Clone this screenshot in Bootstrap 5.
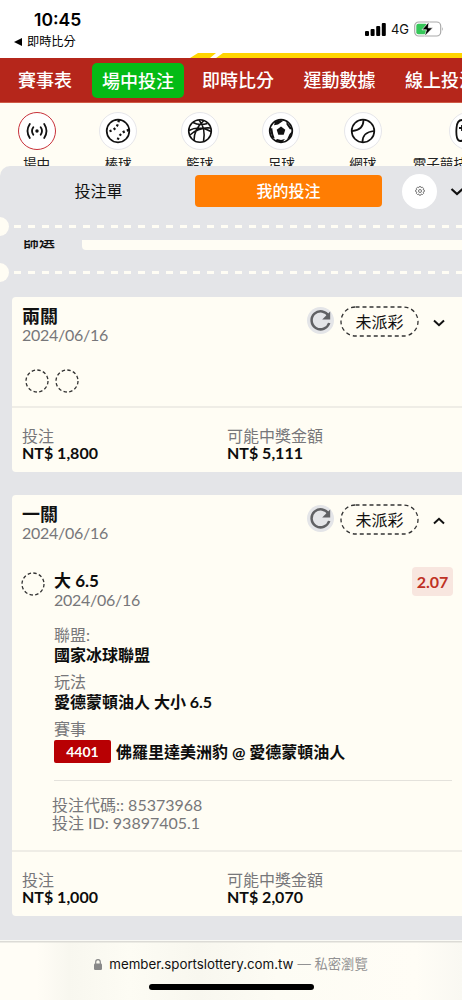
<!DOCTYPE html>
<html lang="zh-Hant">
<head>
<meta charset="utf-8">
<meta name="viewport" content="width=device-width, initial-scale=1">
<title>我的投注</title>
<link href="https://cdn.jsdelivr.net/npm/bootstrap@5.3.0/dist/css/bootstrap.min.css" rel="stylesheet">
<style>
:root{--cream:#fffdf4;--sheet:#e4e5e8;--brand:#b5261b}
body{width:462px;height:1000px;overflow:hidden;background:var(--cream);color:#111;font-family:Lato,"Noto Sans CJK TC",sans-serif;font-size:16px;line-height:18px}
svg{display:block;flex:none}
.ios{font-family:Inter,"Noto Sans CJK TC",sans-serif}
.status{height:58px;background:#fff}
.clock{font-size:17.5px;font-weight:600;line-height:20px;padding:10px 0 0 34px;height:33px;color:#000}
.back{font-size:12.2px;line-height:18px;padding-left:14px;color:#000;gap:4px}
.signal{top:20px;right:18px;gap:5px;font-size:13px}
.stripe{left:190px;top:53px}
.topnav{height:45px;background:var(--brand);border-bottom:1px solid #cf5b47;color:#fff;font-size:18px;font-weight:500;padding-left:18px;white-space:nowrap}
.topnav a{color:#fff;text-decoration:none;line-height:26px;flex:none}
.topnav .wide{width:101.5px}
.topnav .live{background:#04bb16;border-radius:5px;width:92px;height:35px;line-height:36px;text-align:center;margin:0 18px 0 20px}
.sports{height:63px;padding-top:9px;margin-left:-4.3px;width:560px}
.sport{width:81.6px;flex:none;font-size:13.6px;color:#222}
.sport.esport{width:129px}
.esport span{align-self:flex-start;margin-left:9px}
.ball{width:38px;height:38px;border:1px solid #e6e6ea;background:#fff;flex:none}
.ball.on{border-color:#c8313a}
.sport span{white-space:nowrap;line-height:18px;margin-top:5px}
.sheet{height:774px;background:var(--sheet);border-radius:10px 0 0 0;overflow:hidden}
.tabs{height:51px;padding-bottom:1px}
.tab-a{width:195px;text-align:center;padding-left:2px}
.tab-b{width:187px;height:32px;background:#ff7d03;color:#fff;border-radius:4px;line-height:31px;text-align:center;font-weight:500}
.gear{width:35px;height:35px;background:#fff;margin-left:20px;flex:none}
.perf{height:19px}
.notch{width:19px;height:19px;margin-left:-10px;background:var(--cream);flex:none}
.dashes{height:3px;width:462px;margin-left:4.8px;background:repeating-linear-gradient(90deg,var(--cream) 0 7px,transparent 7px 13.8px)}
.filter{height:10.5px;margin:3.5px 0 13px;overflow:hidden}
.filter b{width:82px;padding-left:23px;font-weight:500;margin-top:-9px;line-height:20px;flex:none}
.filter i{width:385px;flex:none;height:10.5px;background:var(--cream);border-radius:0 0 4px 4px}
.slip{margin-left:12px;width:453px;background:var(--cream);border-radius:4px}
.t18{font-size:18px;font-weight:700;height:20px;line-height:20px;color:#111}
.ln{height:18px;line-height:18px;white-space:nowrap}
.lbl{height:20px}
.val{height:27px}
.soft{color:#77777a}
.day{letter-spacing:-.28px}
.bold7{font-weight:700;color:#0d0d0d}
.head{height:50px;padding:9px 0 0 10px}
.name{width:285px}
.reload{width:27px;height:27px;background:var(--sheet);border-radius:50%;margin-top:1px}
.state{width:79px;height:31px;line-height:32px;margin-left:6px}
.chev{margin:13px 0 0 14px}
.foot{border-top:2px solid #efede6;height:65px;padding:19px 0 0 10px}
.foot>div{width:205px}
.foot .bold7{margin-top:-1px}
.odds{background:#f8e6df;color:#bf3124;font-weight:700;width:41px;height:29px;border-radius:4px;line-height:29px;text-align:center;margin-right:-1px}
.code{background:#b80003;color:#fff;width:57px;height:23px;border-radius:2px;line-height:23px;text-align:center;font-size:14px;font-weight:700}
.rule{height:17px;border-bottom:1px solid #e4e2dc}
.addr{height:60px;background:linear-gradient(90deg,#fffdf6 8%,#f8f7ef 15%,#fdfcf4 28%,#f8f7ef 43%,#fdfcf4 60%,#fffdf6 90%,#f9f8f2);border-top:1px solid #fafaf5;box-shadow:inset 0 1.5px 0 #dcdbd6;font-size:13.3px;color:#111}
.homebar{width:165px;height:6px;border-radius:3px;background:#000;margin-top:10px}
</style>
</head>
<body>
<svg width="0" height="0" class="position-absolute"><defs>
<g id="reload"><path d="M21.6 9.2A9 9 0 1 0 22.2 16" fill="none" stroke="#606164" stroke-width="2.5"/><path d="M23.2 4.5v8h-8z" fill="#606164"/></g>
<g id="pill"><rect x="1" y="1" width="77" height="29" rx="14.5" fill="none" stroke="#333" stroke-width="1.3" stroke-dasharray="4 3"/></g>
<g id="ring"><circle cx="12" cy="12" r="11" fill="none" stroke="#333" stroke-width="1.3" stroke-dasharray="3.4 2.36"/></g>
</defs></svg>

<header class="status ios position-relative">
  <div class="clock">10:45</div>
  <div class="back d-flex align-items-center"><svg width="9" height="8"><path d="M0 4 8 0v8z"/></svg><span>即時比分</span></div>
  <div class="signal position-absolute d-flex align-items-center">
    <svg width="21" height="14"><g fill="#000"><rect y="9" width="4" height="5" rx="1"/><rect x="5.6" y="7" width="4" height="7" rx="1"/><rect x="11.2" y="4" width="4" height="10" rx="1"/><rect x="16.8" y="1" width="4" height="13" rx="1"/></g></svg>
    <span>4G</span>
    <svg width="30" height="16"><rect x=".7" y="1" width="26" height="14" rx="4" fill="#fff" stroke="#aaa" stroke-width="1.2"/><rect x="2.3" y="2.7" width="11" height="10.6" rx="2" fill="#35c759"/><path d="M28 6q1.8 2 0 4z" fill="#aaa"/><path d="M15 .8 8 8.8h4.5L10.500 15.300 18.800 6.800h-4.600z" fill="#000" stroke="#fff" stroke-width=".7"/></svg>
  </div>
  <svg class="stripe position-absolute" width="272" height="5"><path d="M0 5 8 0h18l-6 5zM26 5l7-5h239v5z" fill="#ffd500"/></svg>
</header>

<nav class="topnav d-flex align-items-center">
  <a href="#">賽事表</a><a href="#" class="live">場中投注</a><a href="#" class="wide">即時比分</a><a href="#" class="wide">運動數據</a><a href="#">線上投注</a>
</nav>

<div class="overflow-hidden">
<div class="sports d-flex">
  <div class="sport d-flex flex-column align-items-center"><div class="ball on rounded-circle d-flex align-items-center justify-content-center"><svg width="22" height="18" viewBox="0 0 22 18" fill="none" stroke="#111" stroke-width="1.8" stroke-linecap="round"><circle cx="11" cy="9" r="1.7" fill="#111" stroke="none"/><path d="M7.300 5.300q-2.600 3.700 0 7.400M14.700 5.300q2.600 3.700 0 7.400M3.800 2Q-.8 9 3.800 16M18.200 2Q22.800 9 18.200 16"/></svg></div><span>場中</span></div>
  <div class="sport d-flex flex-column align-items-center"><div class="ball rounded-circle d-flex align-items-center justify-content-center"><svg width="26" height="26" viewBox="0 0 26 26" fill="none" stroke="#111" stroke-width="1.7"><circle cx="13" cy="13" r="11.3"/><path d="M13.800 2Q13 12 2 13.800M24 12Q14 14 12.200 24" stroke-width="2.300" stroke-dasharray="2.200 2.300"/></svg></div><span>棒球</span></div>
  <div class="sport d-flex flex-column align-items-center"><div class="ball rounded-circle d-flex align-items-center justify-content-center"><svg width="26" height="26" viewBox="0 0 26 26" fill="none" stroke="#111" stroke-width="1.600"><circle cx="13" cy="13" r="11.300"/><path d="M12 2Q19 10 16.500 23.800M6 4.500Q12 8 20.500 5.500M2 12.500Q12 7 24 13.500M17 2.500Q7 11 7 22.500M3 17Q12 9 23.500 10"/></svg></div><span>籃球</span></div>
  <div class="sport d-flex flex-column align-items-center"><div class="ball rounded-circle d-flex align-items-center justify-content-center"><svg width="26" height="26" viewBox="0 0 26 26"><circle cx="13" cy="13" r="11.300" fill="none" stroke="#111" stroke-width="1.700"/><path d="M13 8.600l4.300 3.100-1.600 5.100h-5.400l-1.600-5.100zM7 3.500 13 2l2 1-5 3.500-4 .8zM18.500 3.500l5.500 7-2 1-3.500-5zM24.300 13l-2.300 7-3 1.500 2.500-5.500zM17 21l-3 3.500-7-1.500 2-2 4 1zM1.700 11l2.500-1 1 6 1.500 4.500-2.500-1z" fill="#111"/></svg></div><span>足球</span></div>
  <div class="sport d-flex flex-column align-items-center"><div class="ball rounded-circle d-flex align-items-center justify-content-center"><svg width="26" height="26" viewBox="0 0 26 26" fill="none" stroke="#111" stroke-width="1.700"><circle cx="13" cy="13" r="11.300"/><path d="M13.500 2Q13.500 12 2 13.200M24 13Q12.500 14 12.500 24"/></svg></div><span>網球</span></div>
  <div class="sport esport d-flex flex-column align-items-center"><div class="ball rounded-circle d-flex align-items-center justify-content-center"><svg width="28" height="26" viewBox="0 0 28 26" fill="none" stroke="#111" stroke-width="1.800"><path d="M8 2h12q5 0 5.500 8 1 13-3 13-2 0-4-5h-7q-2 5-5 5Q1.500 23 2.500 10 3 2 8 2zM5 10h6M8 7v6"/></svg></div><span>電子競技</span></div>
</div>
</div>

<main class="sheet">
  <div class="tabs d-flex align-items-center">
    <div class="tab-a flex-shrink-0">投注單</div><div class="tab-b flex-shrink-0">我的投注</div>
    <div class="gear rounded-circle d-flex align-items-center justify-content-center"><svg width="10" height="10" viewBox="0 0 10 10" fill="none" stroke="#555" stroke-width=".8"><circle cx="5" cy="5" r="1.500"/><path d="m4.200.6h1.600l.4 1.100 1.200-.5 1.100 1.100-.5 1.100 1.300.6v1.700l-1.200.5.5 1.200-1.100 1.100-1.200-.5-.5 1.200H4.200l-.5-1.200-1.200.5-1.100-1.100.5-1.200-1.200-.5V4l1.200-.6-.5-1.100 1.100-1.100 1.200.5z"/></svg></div>
    <svg class="ms-auto" width="12" height="9"><path d="m1.500 2 5.500 5 5.500-5" fill="none" stroke="#111" stroke-width="2.200"/></svg>
  </div>
  <div class="perf d-flex align-items-center"><div class="notch rounded-circle"></div><div class="dashes"></div></div>
  <div class="filter d-flex"><b>篩選</b><i></i></div>
  <div class="perf d-flex align-items-center"><div class="notch rounded-circle"></div><div class="dashes"></div></div>

  <section class="slip" style="margin-top:15px;height:175px">
    <div class="head d-flex">
      <div class="name"><div class="t18">兩關</div><div class="ln soft day">2024/06/16</div></div>
      <div class="reload"><svg width="27" height="27"><use href="#reload"/></svg></div>
      <div class="state position-relative text-center"><svg class="position-absolute" width="79" height="31"><use href="#pill"/></svg>未派彩</div>
      <svg class="chev" width="12" height="9"><path d="m1 1.500 5 4.700 5-4.700" fill="none" stroke="#111" stroke-width="2"/></svg>
    </div>
    <div class="d-flex" style="height:59px;padding:22px 0 0 12.5px;gap:6.5px"><svg width="24" height="24"><use href="#ring"/></svg><svg width="24" height="24"><use href="#ring"/></svg></div>
    <div class="foot d-flex"><div><div class="ln soft">投注</div><div class="ln bold7">NT$ 1,800</div></div><div><div class="ln soft">可能中獎金額</div><div class="ln bold7">NT$ 5,111</div></div></div>
  </section>

  <section class="slip" style="margin-top:23px;height:421px">
    <div class="head d-flex">
      <div class="name"><div class="t18">一關</div><div class="ln soft day">2024/06/16</div></div>
      <div class="reload"><svg width="27" height="27"><use href="#reload"/></svg></div>
      <div class="state position-relative text-center"><svg class="position-absolute" width="79" height="31"><use href="#pill"/></svg>未派彩</div>
      <svg class="chev" width="12" height="9"><path d="m1 6.500 5-4.700 5 4.700" fill="none" stroke="#111" stroke-width="2"/></svg>
    </div>
    <div class="d-flex" style="height:305px;padding:22px 0 0 9px">
      <svg width="24" height="24" style="margin-top:5px"><use href="#ring"/></svg>
      <div style="margin-left:9px;width:398px">
        <div class="d-flex justify-content-between" style="height:59px">
          <div><div class="ln bold7" style="font-size:17px;height:19px;margin-top:5px">大 6.5</div><div class="ln soft day">2024/06/16</div></div>
          <div class="odds">2.07</div>
        </div>
        <div class="ln soft lbl">聯盟:</div><div class="ln bold7 val">國家冰球聯盟</div>
        <div class="ln soft lbl">玩法</div><div class="ln bold7 val">愛德蒙頓油人 大小 6.5</div>
        <div class="ln soft lbl">賽事</div>
        <div class="d-flex align-items-center" style="gap:5px;height:23px;margin-bottom:1px"><div class="code">4401</div><div class="ln bold7">佛羅里達美洲豹 @ 愛德蒙頓油人</div></div>
        <div class="rule"></div>
        <div class="soft" style="margin:15px 0 0 -2px"><div class="ln">投注代碼:: 85373968</div><div class="ln">投注 ID: 93897405.1</div></div>
      </div>
    </div>
    <div class="foot d-flex"><div><div class="ln soft">投注</div><div class="ln bold7">NT$ 1,000</div></div><div><div class="ln soft">可能中獎金額</div><div class="ln bold7">NT$ 2,070</div></div></div>
  </section>
</main>

<footer class="addr ios d-flex flex-column align-items-center">
  <div class="d-flex align-items-center" style="margin-top:13px;height:20px"><svg width="8" height="11" style="margin-right:7px"><rect y="4.500" width="8" height="6.500" rx="1.200" fill="#888"/><path d="M1.700 5V3a2.300 2.300 0 0 1 4.600 0v2" fill="none" stroke="#888" stroke-width="1.200"/></svg><span>member.sportslottery.com.tw</span><span class="soft ms-1" style="opacity:.8">— 私密瀏覽</span></div>
  <div class="homebar"></div>
</footer>
<script src="https://cdn.jsdelivr.net/npm/bootstrap@5.3.0/dist/js/bootstrap.bundle.min.js"></script>
</body>
</html>
